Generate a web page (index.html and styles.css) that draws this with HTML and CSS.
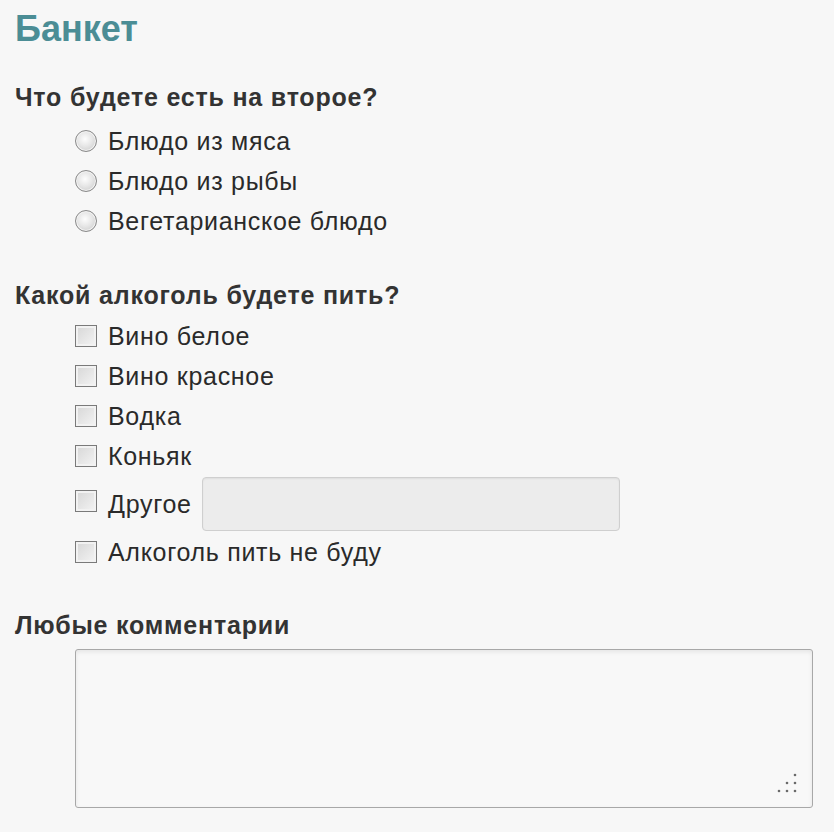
FILE: index.html
```html
<!DOCTYPE html>
<html lang="ru">
<head>
<meta charset="utf-8">
<link rel="stylesheet" href="styles.css">
</head>
<body>
<form class="form">
  <h1 class="title">Банкет</h1>

  <fieldset class="group">
    <legend class="question">Что будете есть на второе?</legend>
    <div class="options radios">
      <label class="option"><span class="radio"></span><span>Блюдо из мяса</span></label>
      <label class="option"><span class="radio"></span><span>Блюдо из рыбы</span></label>
      <label class="option"><span class="radio"></span><span>Вегетарианское блюдо</span></label>
    </div>
  </fieldset>

  <fieldset class="group">
    <legend class="question">Какой алкоголь будете пить?</legend>
    <div class="options checks">
      <label class="option"><span class="check"></span><span>Вино белое</span></label>
      <label class="option"><span class="check"></span><span>Вино красное</span></label>
      <label class="option"><span class="check"></span><span>Водка</span></label>
      <label class="option"><span class="check"></span><span>Коньяк</span></label>
      <label class="option other"><span class="check"></span><span>Другое</span><span class="text-input"></span></label>
      <label class="option"><span class="check"></span><span>Алкоголь пить не буду</span></label>
    </div>
  </fieldset>

  <div class="group">
    <div class="question">Любые комментарии</div>
    <div class="textarea">
      <svg class="grip" width="20" height="20" viewBox="0 0 20 20"><g fill="#6a6a6a"><circle cx="18" cy="2" r="1.3"/><circle cx="10" cy="10" r="1.3"/><circle cx="18" cy="10" r="1.3"/><circle cx="2" cy="18" r="1.3"/><circle cx="10" cy="18" r="1.3"/><circle cx="18" cy="18" r="1.3"/></g></svg>
    </div>
  </div>
</form>
</body>
</html>
```

FILE: styles.css
```css
html, body {
  margin: 0;
  padding: 0;
  background: #f7f7f7;
}
body {
  font-family: "Liberation Sans", Arial, sans-serif;
  color: #2a2a2a;
}
.form {
  padding: 10px 0 0 15px;
  display: flex;
  flex-direction: column;
}
.title {
  margin: 0;
  font-size: 36px;
  line-height: 38px;
  font-weight: bold;
  color: #4b8d95;
}
.group {
  border: 0;
  margin: 0;
  padding: 0;
  display: flex;
  flex-direction: column;
}
.question {
  padding: 0;
  font-size: 25px;
  letter-spacing: 0.8px;
  font-weight: bold;
  line-height: 30px;
  color: #333;
}
fieldset.group:first-of-type { margin-top: 34px; }
.options {
  display: flex;
  flex-direction: column;
  padding-left: 60px;
}
.radios { margin-top: 9px; margin-bottom: 39px; }
.checks { margin-top: 6px; margin-bottom: 38px; }
.option {
  display: flex;
  align-items: center;
  gap: 10px;
  height: 40px;
  font-size: 25px;
  letter-spacing: 0.7px;
}
.option.other { height: 54px; margin: 1px 0 1px; }
.radio {
  width: 20px;
  height: 20px;
  border-radius: 50%;
  border: 1px solid #8a8a8a;
  background: radial-gradient(circle at 45% 40%, #fdfdfd 0%, #e6e6e6 45%, #c4c4c4 100%);
  box-shadow: inset 0 0 0 1px #f4f4f4;
  flex: none;
  margin-right: 1px;
}
.check {
  width: 20px;
  height: 20px;
  border: 1px solid #7a7a7a;
  background: linear-gradient(135deg, #d6d6d6 0%, #e8e8e8 60%, #f4f4f4 100%);
  box-shadow: inset 0 0 0 2px #f2f2f2;
  flex: none;
  margin-right: 1px;
}
.other .check { margin-top: -6px; }
.text-input {
  width: 416px;
  height: 52px;
  border: 1px solid #cfcfcf;
  border-radius: 4px;
  background: #ececec;
  box-shadow: inset 0 1px 2px rgba(0,0,0,0.06);
}
.group:last-child .question { margin-bottom: 9px; }
.textarea {
  margin-left: 60px;
  width: 736px;
  height: 157px;
  border: 1px solid #a8a8a8;
  border-radius: 3px;
  background: #f8f8f8;
  box-shadow: inset 0 2px 4px rgba(0,0,0,0.08);
  position: relative;
}
.grip {
  position: absolute;
  right: 15px;
  bottom: 14px;
}
```
